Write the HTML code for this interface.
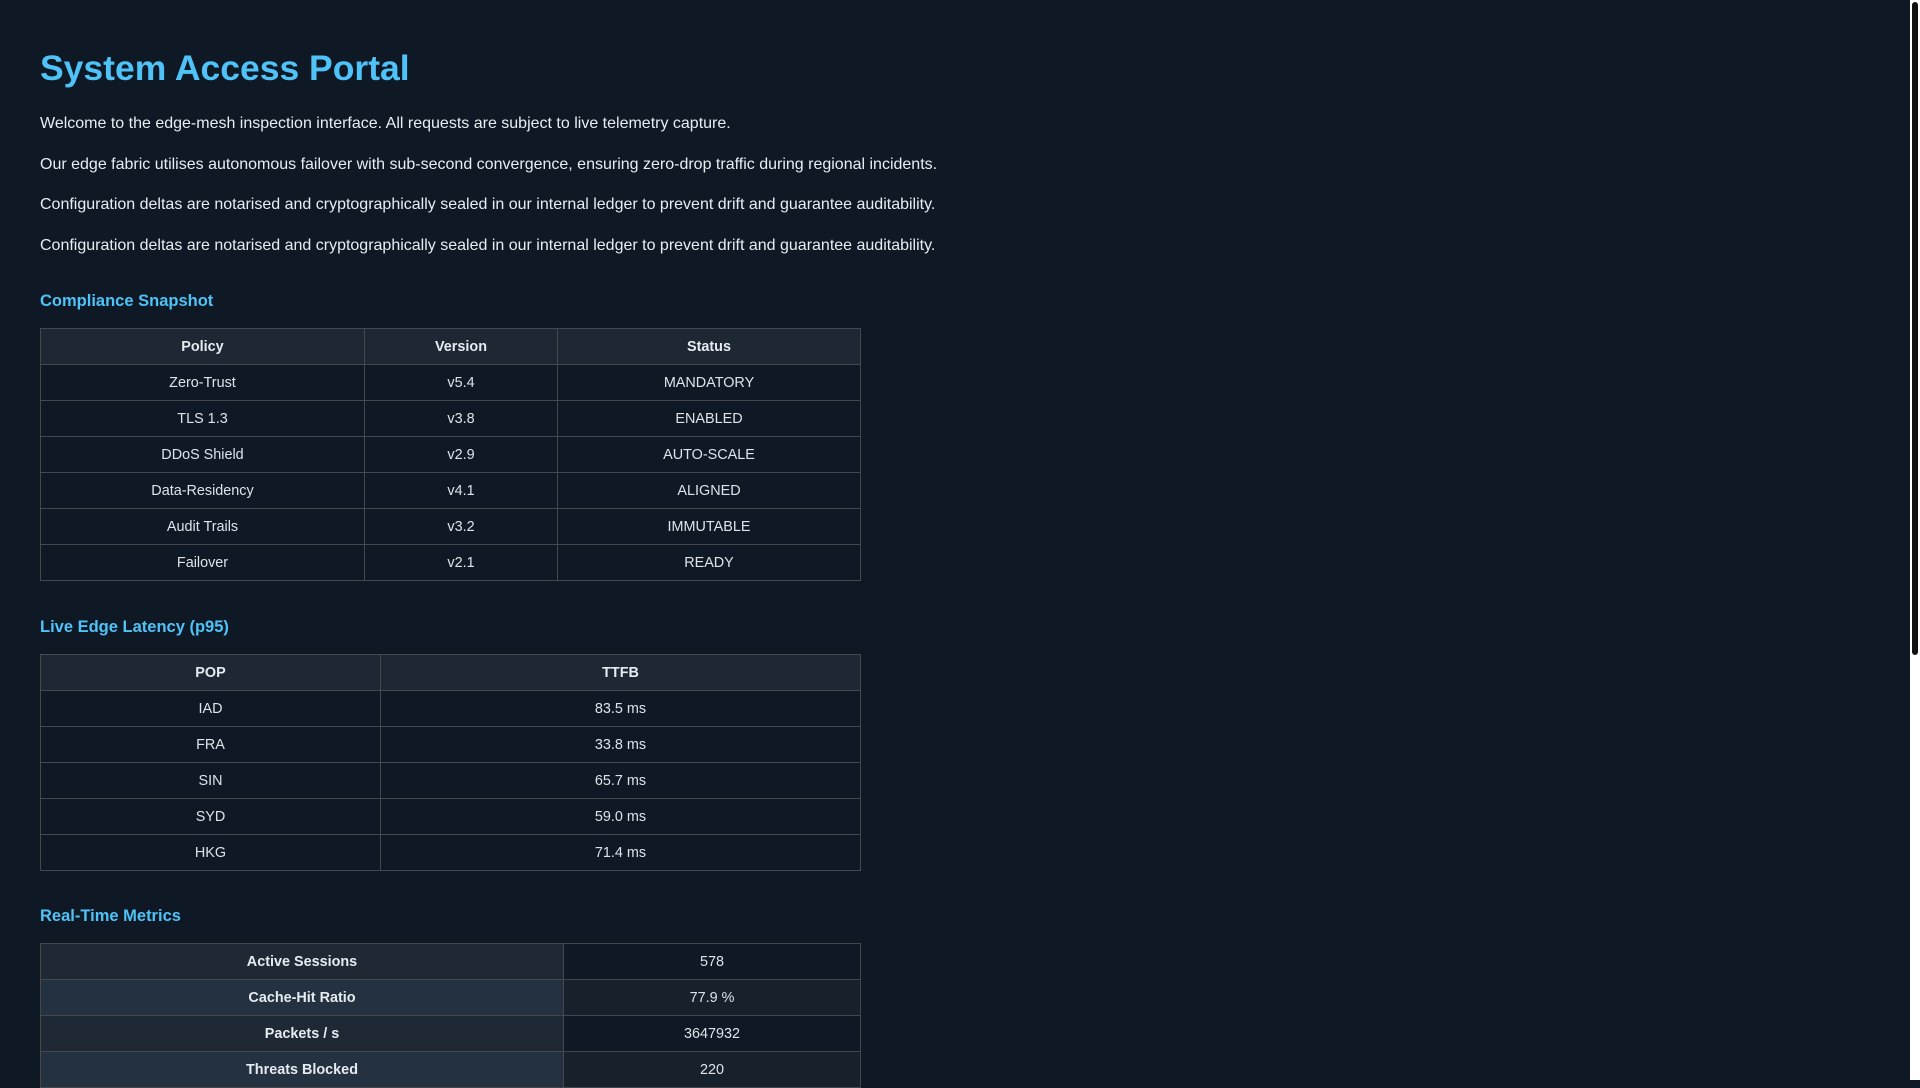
<!DOCTYPE html>
<html><head><meta charset="utf-8"><style>
html,body{margin:0;padding:0;background:#0e1925;}
body{width:1920px;height:1080px;overflow:hidden;font-family:"Liberation Sans",Arial,sans-serif;color:#e4e9ee;position:relative}
.wrap{position:absolute;left:40px;top:0;width:1860px}
h1{position:absolute;top:45px;left:0;margin:0;font-size:35.5px;line-height:46px;color:#4fc3f7;font-weight:bold;white-space:nowrap}
p{position:absolute;left:0;margin:0;font-size:16px;line-height:24px;white-space:nowrap;color:#e8edf2}
h2{position:absolute;left:0;margin:0;font-size:16.5px;line-height:22px;color:#4fc3f7;font-weight:bold;white-space:nowrap}
table{position:absolute;left:0;width:820px;border-collapse:collapse;table-layout:fixed;font-size:14.4px}
td,th{border:1px solid #45484c;text-align:center;padding:1px 0 0 0;height:34px;line-height:34px;color:#dde3ea}
th{background:#1d2834;font-weight:bold;color:#e6ebf0}
.m td.l{background:#1e2935;font-weight:bold;color:#e6ebf0}
.m tr:nth-child(even) td.l{background:#243140}
.m tr:nth-child(even) td.v{background:#16212c}
.scroll{position:absolute;left:1910px;top:0;width:10px;height:1080px;background:#fff}
.thumb{position:absolute;left:2px;top:2px;width:6px;height:653px;background:#111;border-radius:3px}
</style></head><body>
<div class="wrap">
<h1>System Access Portal</h1>
<p style="top:112px">Welcome to the edge-mesh inspection interface. All requests are subject to live telemetry capture.</p>
<p style="top:152.5px">Our edge fabric utilises autonomous failover with sub-second convergence, ensuring zero-drop traffic during regional incidents.</p>
<p style="top:193px">Configuration deltas are notarised and cryptographically sealed in our internal ledger to prevent drift and guarantee auditability.</p>
<p style="top:233.5px">Configuration deltas are notarised and cryptographically sealed in our internal ledger to prevent drift and guarantee auditability.</p>
<h2 style="top:290px">Compliance Snapshot</h2>
<table style="top:328px">
<colgroup><col style="width:324px"><col style="width:193px"><col style="width:303px"></colgroup>
<tr><th>Policy</th><th>Version</th><th>Status</th></tr>
<tr><td>Zero-Trust</td><td>v5.4</td><td>MANDATORY</td></tr>
<tr><td>TLS 1.3</td><td>v3.8</td><td>ENABLED</td></tr>
<tr><td>DDoS Shield</td><td>v2.9</td><td>AUTO-SCALE</td></tr>
<tr><td>Data-Residency</td><td>v4.1</td><td>ALIGNED</td></tr>
<tr><td>Audit Trails</td><td>v3.2</td><td>IMMUTABLE</td></tr>
<tr><td>Failover</td><td>v2.1</td><td>READY</td></tr>
</table>
<h2 style="top:616px">Live Edge Latency (p95)</h2>
<table style="top:654px">
<colgroup><col style="width:340px"><col style="width:480px"></colgroup>
<tr><th>POP</th><th>TTFB</th></tr>
<tr><td>IAD</td><td>83.5 ms</td></tr>
<tr><td>FRA</td><td>33.8 ms</td></tr>
<tr><td>SIN</td><td>65.7 ms</td></tr>
<tr><td>SYD</td><td>59.0 ms</td></tr>
<tr><td>HKG</td><td>71.4 ms</td></tr>
</table>
<h2 style="top:905px">Real-Time Metrics</h2>
<table class="m" style="top:943px">
<colgroup><col style="width:523px"><col style="width:297px"></colgroup>
<tr><td class="l">Active Sessions</td><td class="v">578</td></tr>
<tr><td class="l">Cache-Hit Ratio</td><td class="v">77.9 %</td></tr>
<tr><td class="l">Packets / s</td><td class="v">3647932</td></tr>
<tr><td class="l">Threats Blocked</td><td class="v">220</td></tr>
</table>
</div>
<div class="scroll"><div class="thumb"></div></div>
</body></html>
